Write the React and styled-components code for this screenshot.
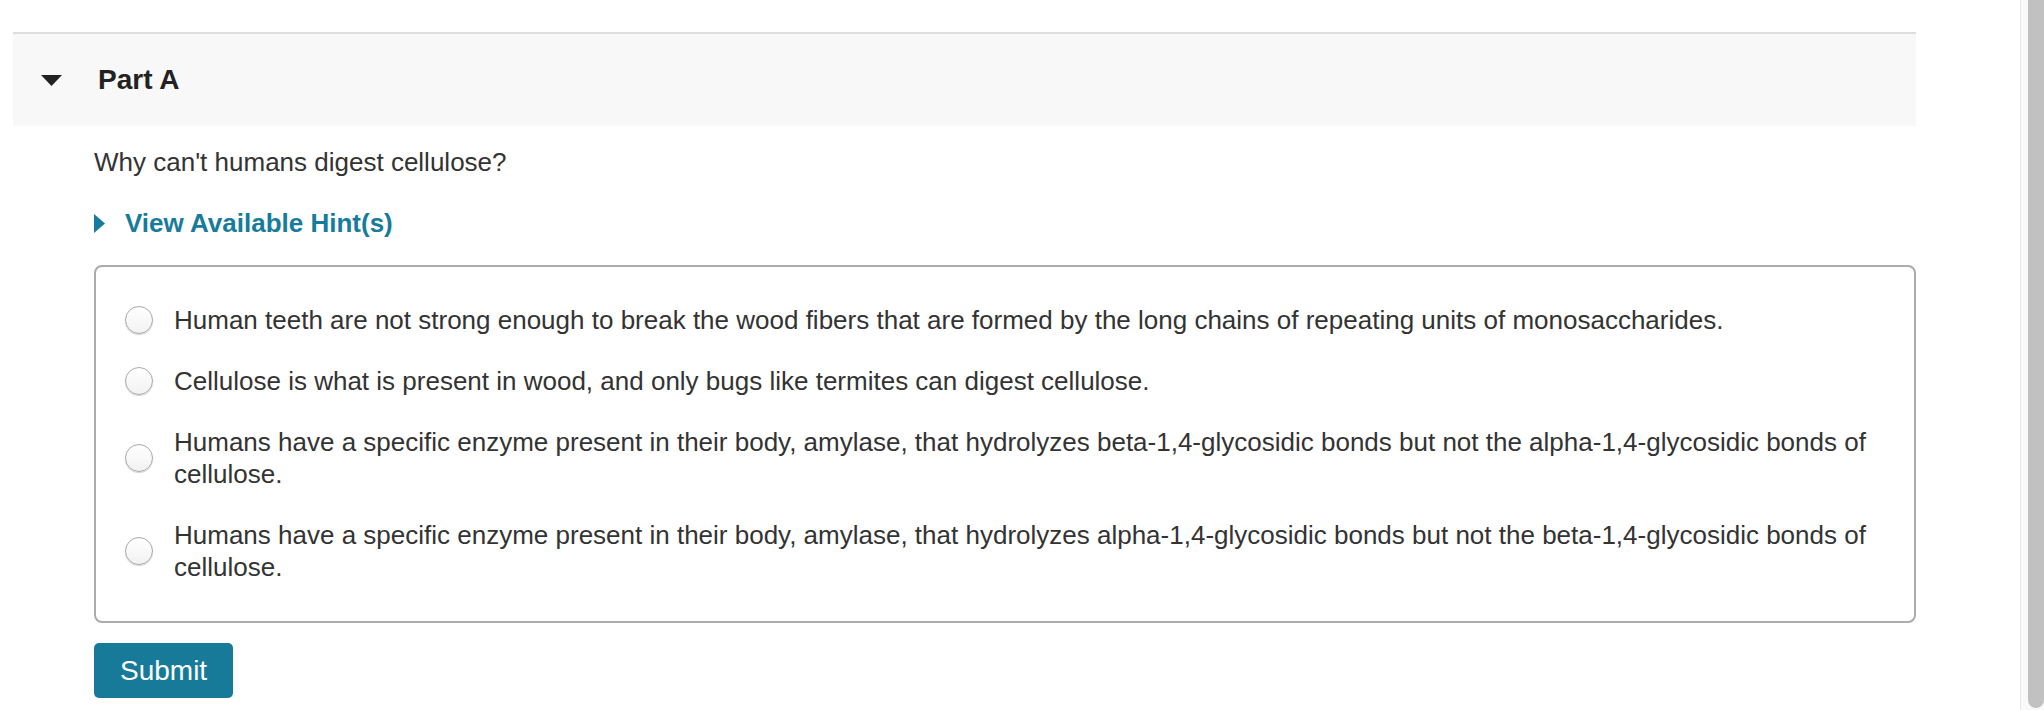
import React from 'react';
import styled, { createGlobalStyle } from 'styled-components';

const GlobalStyle = createGlobalStyle`
    html, body {
        margin: 0;
        padding: 0;
        background: #ffffff;
        font-family: "Liberation Sans", Arial, Helvetica, sans-serif;
        color: #333333;
        overflow: hidden;
    }
`;

const Page = styled.div`
    display: flex;
    height: 100vh;
`;

const Main = styled.main`
    flex: 1;
    padding: 32px 0 0 13px;
`;

const Panel = styled.section`
    width: 1903px;
    border-top: 2px solid #dedede;
`;

const PartHeader = styled.div`
    display: flex;
    align-items: center;
    gap: 36px;
    height: 92px;
    padding-left: 28px;
    background: #f8f8f8;
`;

const PartTitle = styled.h2`
    margin: 0;
    font-size: 28px;
    line-height: 32px;
    font-weight: 700;
    color: #222222;
`;

const PartBody = styled.div`
    padding-left: 81px;
`;

const Question = styled.p`
    margin: 20px 0 0;
    font-size: 26px;
    line-height: 32px;
`;

const HintToggle = styled.button`
    display: flex;
    align-items: center;
    gap: 20px;
    margin-top: 29px;
    padding: 0;
    border: 0;
    background: none;
    font-family: inherit;
    font-size: 26px;
    line-height: 32px;
    font-weight: 700;
    color: #177b9b;
    cursor: pointer;
`;

const ChoiceBox = styled.div`
    display: flex;
    flex-direction: column;
    gap: 29px;
    margin-top: 26px;
    width: 1822px;
    box-sizing: border-box;
    padding: 37px 20px 38px 29px;
    border: 2px solid #ababab;
    border-radius: 8px;
`;

const Choice = styled.label`
    display: flex;
    align-items: center;
    gap: 21px;
    font-size: 26px;
    line-height: 32px;
    cursor: pointer;
`;

const Radio = styled.input.attrs({ type: 'radio' })`
    appearance: none;
    flex: none;
    width: 28px;
    height: 28px;
    margin: 0;
    border: 1px solid #a9a9a9;
    border-radius: 50%;
    background: linear-gradient(#ffffff, #f2f2f2);
    box-shadow: 0 1px 1px rgba(0, 0, 0, 0.18);
`;

const SubmitButton = styled.button`
    margin-top: 20px;
    height: 55px;
    padding: 0 26px;
    border: 0;
    border-radius: 5px;
    background: #167a98;
    color: #ffffff;
    font-family: inherit;
    font-size: 28px;
    cursor: pointer;
`;

const ScrollTrack = styled.div`
    display: flex;
    width: 24px;
    box-sizing: border-box;
    padding: 0 0 2px 7px;
    border-left: 1px solid #e6e6e6;
    background: #f9f9f9;
`;

const ScrollThumb = styled.div`
    flex: 1;
    background: #c1c1c1;
    border-radius: 0 0 8px 8px;
`;

const choices = [
    'Human teeth are not strong enough to break the wood fibers that are formed by the long chains of repeating units of monosaccharides.',
    'Cellulose is what is present in wood, and only bugs like termites can digest cellulose.',
    'Humans have a specific enzyme present in their body, amylase, that hydrolyzes beta-1,4-glycosidic bonds but not the alpha-1,4-glycosidic bonds of cellulose.',
    'Humans have a specific enzyme present in their body, amylase, that hydrolyzes alpha-1,4-glycosidic bonds but not the beta-1,4-glycosidic bonds of cellulose.',
];

function App() {
    return (
        <>
            <GlobalStyle />
            <Page>
                <Main>
                    <Panel>
                        <PartHeader>
                            <svg width="21" height="11" viewBox="0 0 21 11">
                                <path d="M0 0 H21 L10.5 11 Z" fill="#222" />
                            </svg>
                            <PartTitle>Part A</PartTitle>
                        </PartHeader>
                        <PartBody>
                            <Question>Why can't humans digest cellulose?</Question>
                            <HintToggle>
                                <svg width="11" height="19" viewBox="0 0 11 19">
                                    <path d="M0 0 L11 9.5 L0 19 Z" fill="#177b9b" />
                                </svg>
                                View Available Hint(s)
                            </HintToggle>
                            <ChoiceBox>
                                {choices.map((text, i) => (
                                    <Choice key={i}>
                                        <Radio name="partA" />
                                        <span>{text}</span>
                                    </Choice>
                                ))}
                            </ChoiceBox>
                            <SubmitButton>Submit</SubmitButton>
                        </PartBody>
                    </Panel>
                </Main>
                <ScrollTrack>
                    <ScrollThumb />
                </ScrollTrack>
            </Page>
        </>
    );
}

export default App;
